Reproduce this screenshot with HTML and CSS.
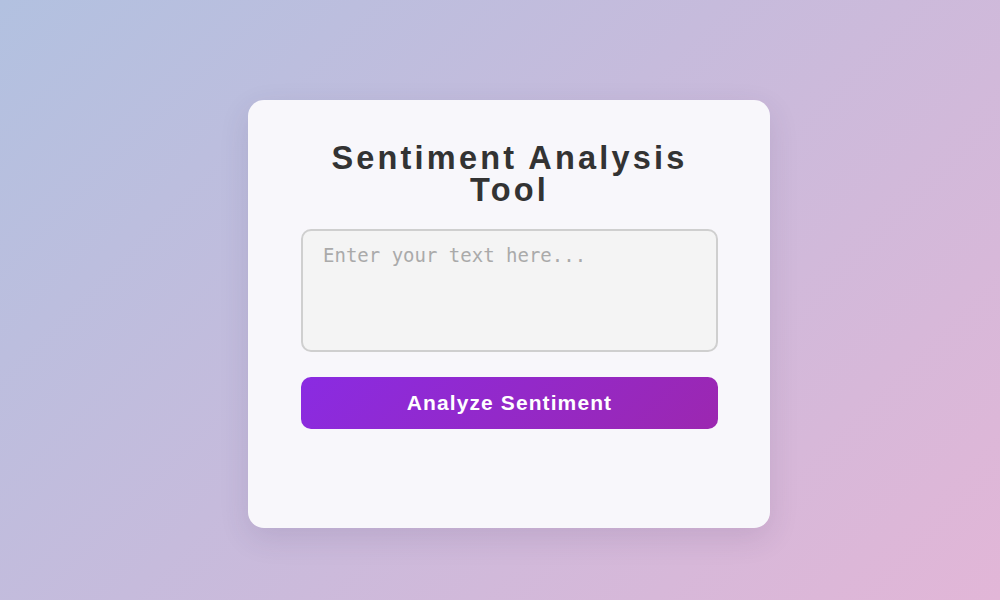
FILE: index.html
```html
<!DOCTYPE html>
<html lang="en">
<head>
<meta charset="utf-8">
<title>Sentiment Analysis Tool</title>
<link rel="stylesheet" href="styles.css">
</head>
<body>
<main class="card">
  <h1 class="title">Sentiment Analysis Tool</h1>
  <textarea class="input" placeholder="Enter your text here..."></textarea>
  <button class="analyze" type="button">Analyze Sentiment</button>
</main>
</body>
</html>
```

FILE: styles.css
```css
html, body {
  margin: 0;
  height: 100%;
}
body {
  box-sizing: border-box;
  background: linear-gradient(135deg, #b2c1e0 0%, #c6bbdc 45%, #e2b6d7 100%);
  font-family: "Liberation Sans", Arial, sans-serif;
  display: flex;
  justify-content: center;
  align-items: flex-start;
  padding: 100px 0 0 18px;
}
.card {
  width: 522px;
  height: 428px;
  box-sizing: border-box;
  padding: 42px 52px 0 53px;
  background: #f8f7fb;
  border-radius: 16px;
  box-shadow: 0 10px 30px rgba(60, 40, 90, 0.12);
  display: flex;
  flex-direction: column;
}
.title {
  margin: 0 0 23px;
  font-size: 32.5px;
  line-height: 32px;
  font-weight: bold;
  color: #333;
  text-align: center;
  letter-spacing: 3.2px;
  padding: 0 20px;
}
.input {
  box-sizing: border-box;
  width: 417px;
  height: 123px;
  margin: 0;
  padding: 13px 20px;
  border: 2px solid #cfcfcf;
  border-radius: 10px;
  background: #f4f4f4;
  font-family: "DejaVu Sans Mono", monospace;
  font-size: 19px;
  color: #333;
  resize: none;
  outline: none;
}
.input::placeholder {
  color: #aaa;
}
.analyze {
  margin-top: 25px;
  width: 417px;
  height: 52px;
  border: none;
  border-radius: 10px;
  background: linear-gradient(135deg, #8a2be2, #9c27b0);
  color: #fff;
  font-family: "Liberation Sans", Arial, sans-serif;
  font-size: 21px;
  font-weight: bold;
  letter-spacing: 1.1px;
  cursor: pointer;
}
```
